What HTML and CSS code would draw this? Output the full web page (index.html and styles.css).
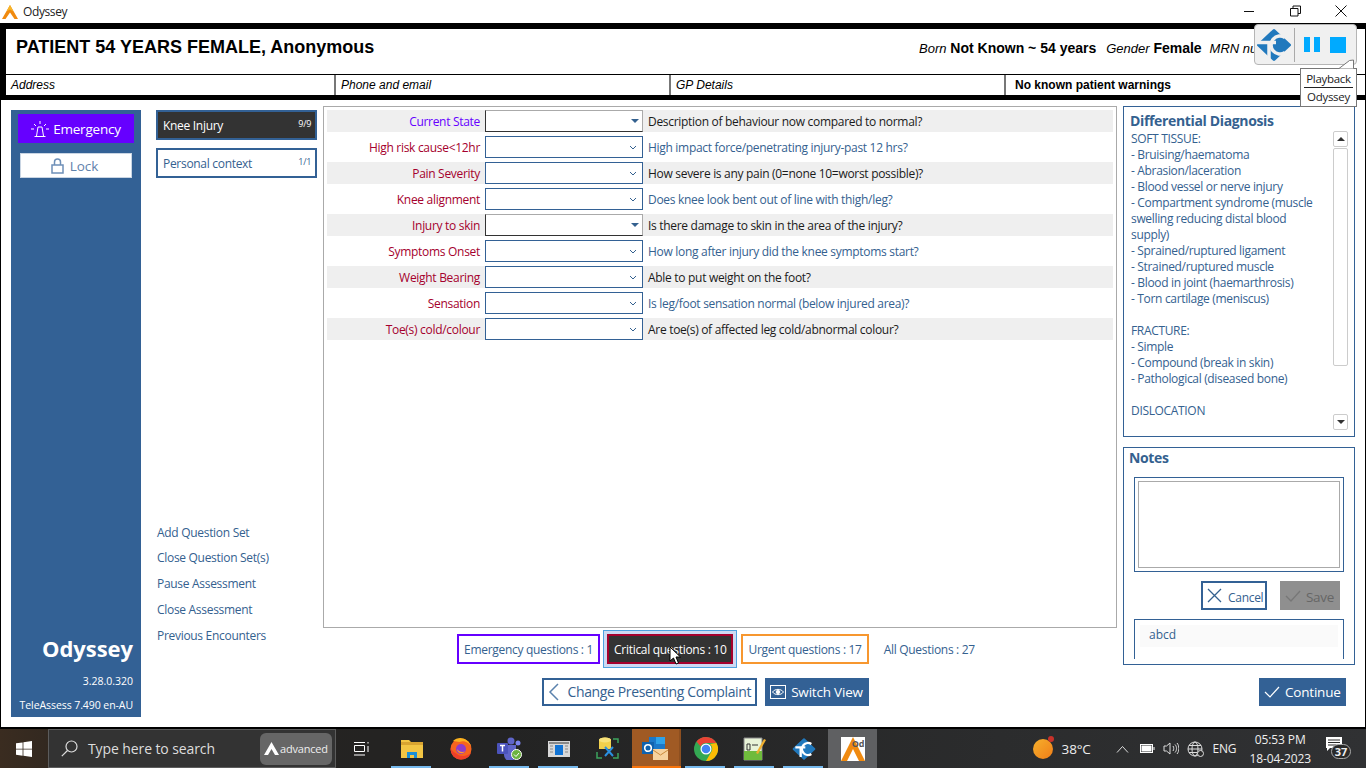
FILE: index.html
```html
<!DOCTYPE html>
<html lang="en">
<head>
<meta charset="utf-8">
<title>Odyssey</title>
<link rel="stylesheet" href="styles.css">
</head>
<body>
<div class="screen">
  <div class="titlebar">
    <svg class="app-logo" viewBox="0 0 16 14" width="16" height="14"><path d="M8 0 L16 14 H12.500 L8 7.500 L3.500 14 H0 Z" fill="#f08a10"/><path d="M8 0 L11.500 6.500 L8 4.500 L4.500 6.500 Z" fill="#f7b62a"/></svg>
    <span class="app-title">Odyssey</span>
    <div class="winbtns">
      <svg width="46" height="23" viewBox="0 0 46 23"><path d="M18 11.500H28" stroke="#111"/></svg>
      <svg width="46" height="23" viewBox="0 0 46 23"><path d="M18.500 8.500h7.500v7.500h-7.500zM21 8.500v-2.500h7.500v7.500h-2.500" fill="none" stroke="#111"/></svg>
      <svg width="46" height="23" viewBox="0 0 46 23"><path d="M17.500 5.500l11 11M28.500 5.500l-11 11" stroke="#111"/></svg>
    </div>
  </div>
  <div class="window">
    <header class="patient">
      <div class="patient-top">
        <h1 class="patient-name">PATIENT 54 YEARS FEMALE, Anonymous</h1>
        <div class="patient-meta"><i>Born</i> <b>Not Known ~ 54 years</b> <i class="gap">Gender</i> <b>Female</b> <i class="gap2">MRN number</i></div>
      </div>
      <div class="patient-row">
        <div class="cell"><i>Address</i></div>
        <div class="cell"><i>Phone and email</i></div>
        <div class="cell"><i>GP Details</i></div>
        <div class="cell warn"><b>No known patient warnings</b></div>
      </div>
    </header>
    <main class="main">
      <aside class="sidebar">
        <button class="btn-emergency">
          <svg width="18" height="16" viewBox="0 0 18 16" fill="none" stroke="#fff" stroke-width="1"><path d="M3.500 15.500h11M5.500 15l1.500-9h4l1.500 9M9 0v3M3 3l2 2M15 3l-2 2M0 8h3M15 8h3"/></svg>
          Emergency
        </button>
        <button class="btn-lock">
          <svg width="13" height="16" viewBox="0 0 13 16" fill="none" stroke="#6d8fb8" stroke-width="1.500"><rect x="1" y="7" width="11" height="8"/><path d="M3.500 7V4a3 3 0 0 1 6 0v3"/></svg>
          Lock
        </button>
        <div class="brand">
          <div class="brand-name">Odyssey</div>
          <div class="brand-ver">3.28.0.320</div>
          <div class="brand-ta">TeleAssess 7.490 en-AU</div>
        </div>
      </aside>
      <nav class="sets">
        <div class="set active"><span>Knee Injury</span><small>9/9</small></div>
        <div class="set"><span>Personal context</span><small>1/1</small></div>
        <div class="links">
          <a>Add Question Set</a>
          <a>Close Question Set(s)</a>
          <a>Pause Assessment</a>
          <a>Close Assessment</a>
          <a>Previous Encounters</a>
        </div>
      </nav>
      <section class="centre">
        <div class="questions">
          <div class="q shade"><label class="emerg">Current State</label><div class="sel dark"><svg class="tri" width="8" height="4" viewBox="0 0 8 4"><path d="M0 0h8L4 4z" fill="#34618f"/></svg></div><p class="black">Description of behaviour now compared to normal?</p></div>
          <div class="q"><label>High risk cause&lt;12hr</label><div class="sel"><svg class="chev" width="8" height="5" viewBox="0 0 8 5"><path d="M1 1l3 3 3-3" fill="none" stroke="#34618f"/></svg></div><p>High impact force/penetrating injury-past 12 hrs?</p></div>
          <div class="q shade"><label>Pain Severity</label><div class="sel"><svg class="chev" width="8" height="5" viewBox="0 0 8 5"><path d="M1 1l3 3 3-3" fill="none" stroke="#34618f"/></svg></div><p class="black">How severe is any pain (0=none 10=worst possible)?</p></div>
          <div class="q"><label>Knee alignment</label><div class="sel"><svg class="chev" width="8" height="5" viewBox="0 0 8 5"><path d="M1 1l3 3 3-3" fill="none" stroke="#34618f"/></svg></div><p>Does knee look bent out of line with thigh/leg?</p></div>
          <div class="q shade"><label>Injury to skin</label><div class="sel dark"><svg class="tri" width="8" height="4" viewBox="0 0 8 4"><path d="M0 0h8L4 4z" fill="#34618f"/></svg></div><p class="black">Is there damage to skin in the area of the injury?</p></div>
          <div class="q"><label>Symptoms Onset</label><div class="sel"><svg class="chev" width="8" height="5" viewBox="0 0 8 5"><path d="M1 1l3 3 3-3" fill="none" stroke="#34618f"/></svg></div><p>How long after injury did the knee symptoms start?</p></div>
          <div class="q shade"><label>Weight Bearing</label><div class="sel"><svg class="chev" width="8" height="5" viewBox="0 0 8 5"><path d="M1 1l3 3 3-3" fill="none" stroke="#34618f"/></svg></div><p class="black">Able to put weight on the foot?</p></div>
          <div class="q"><label>Sensation</label><div class="sel"><svg class="chev" width="8" height="5" viewBox="0 0 8 5"><path d="M1 1l3 3 3-3" fill="none" stroke="#34618f"/></svg></div><p>Is leg/foot sensation normal (below injured area)?</p></div>
          <div class="q shade"><label>Toe(s) cold/colour</label><div class="sel"><svg class="chev" width="8" height="5" viewBox="0 0 8 5"><path d="M1 1l3 3 3-3" fill="none" stroke="#34618f"/></svg></div><p class="black">Are toe(s) of affected leg cold/abnormal colour?</p></div>
        </div>
        <div class="filters">
          <div class="filter f-em">Emergency questions : 1</div>
          <div class="f-halo"><div class="filter f-cr">Critical questions : 10</div>
            <svg class="cursor" width="13" height="19" viewBox="0 0 13 19"><path d="M1 1v14l3.500-3 2.500 6 2.500-1-2.500-6h4.500z" fill="#fff" stroke="#000"/></svg>
          </div>
          <div class="filter f-ur">Urgent questions : 17</div>
          <div class="filter f-all">All Questions : 27</div>
        </div>
        <div class="actions">
          <button class="btn-back">
            <svg width="12" height="18" viewBox="0 0 12 18" fill="none" stroke="#5b82ad" stroke-width="1.500"><path d="M10 1L2 9l8 8"/></svg>
            Change Presenting Complaint
          </button>
          <button class="btn-switch">
            <svg width="16" height="14" viewBox="0 0 16 14" fill="none" stroke="#fff"><rect x=".5" y=".5" width="15" height="13"/><path d="M2.500 7C5 3.500 11 3.500 13.500 7 11 10.500 5 10.500 2.500 7z"/><circle cx="8" cy="7" r="1.800" fill="#fff"/></svg>
            Switch View
          </button>
        </div>
      </section>
      <aside class="right">
        <div class="panel diff">
          <h2>Differential Diagnosis</h2>
          <div class="diff-body">
            <div class="diff-text">SOFT TISSUE:<br>- Bruising/haematoma<br>- Abrasion/laceration<br>- Blood vessel or nerve injury<br>- Compartment syndrome (muscle swelling reducing distal blood supply)<br>- Sprained/ruptured ligament<br>- Strained/ruptured muscle<br>- Blood in joint (haemarthrosis)<br>- Torn cartilage (meniscus)<br><br>FRACTURE:<br>- Simple<br>- Compound (break in skin)<br>- Pathological (diseased bone)<br><br>DISLOCATION</div>
            <div class="scroll">
              <div class="sb"><svg width="8" height="4" viewBox="0 0 8 4"><path d="M0 4h8L4 0z" fill="#333"/></svg></div>
              <div class="sb thumb"></div>
              <div class="sb sb-end"><svg width="8" height="4" viewBox="0 0 8 4"><path d="M0 0h8L4 4z" fill="#333"/></svg></div>
            </div>
          </div>
        </div>
        <div class="panel notes">
          <h2>Notes</h2>
          <div class="note-box"><div class="note-inner"></div></div>
          <div class="note-btns">
            <button class="btn-cancel">
              <svg width="15" height="15" viewBox="0 0 15 15" fill="none" stroke="#34618f" stroke-width="1.300"><path d="M1 1l13 13M14 1L1 14"/></svg>
              <span>Cancel</span>
            </button>
            <button class="btn-save">
              <svg width="16" height="12" viewBox="0 0 16 12" fill="none" stroke="#777" stroke-width="1.300"><path d="M1 6l5 5L15 1"/></svg>
              <span>Save</span>
            </button>
          </div>
          <div class="note-list"><div class="note-item">abcd</div></div>
        </div>
        <div class="continue-row">
          <button class="btn-continue">
            <svg width="16" height="12" viewBox="0 0 16 12" fill="none" stroke="#fff" stroke-width="1.200"><path d="M1 6l5 5L15 1"/></svg>
            Continue
          </button>
        </div>
      </aside>
    </main>
  </div>
  <footer class="taskbar">
    <div class="start"><svg width="16" height="16" viewBox="0 0 16 16" fill="#fff"><path d="M0 2.300l6.600-.9v6.300H0zM7.400 1.300L16 0v7.700H7.400zM0 8.400h6.600v6.300L0 13.800zM7.400 8.400H16V16l-8.600-1.200z"/></svg></div>
    <div class="search">
      <svg width="17" height="17" viewBox="0 0 17 17" fill="none" stroke="#ddd" stroke-width="1.200"><circle cx="10.500" cy="6.500" r="5.500"/><path d="M6.500 10.500L.8 16.200"/></svg>
      <span class="search-text">Type here to search</span>
      <div class="adv"><svg width="15" height="13" viewBox="0 0 15 13"><path d="M7.500 0L15 13h-4L7.500 7 4 13H0z" fill="#fff"/></svg><span>advanced</span></div>
    </div>
    <div class="taskview"><svg width="16" height="15" viewBox="0 0 16 15" fill="none" stroke="#fff"><path d="M0 1.500h11M0 14h11M.5 4.500h10v6H.5zM14 1v1.500M14 5v6"/></svg></div>
    <div class="tb"><div class="ti run"><svg width="22" height="18" viewBox="0 0 22 18"><path d="M0 0h8l2 2h12v16H0z" fill="#f3c544"/><path d="M0 2h22v3H0z" fill="#d9a431"/><path d="M6 18v-6h10v6h-3v-3H9v3z" fill="#1a8fd6"/></svg></div>
      <div class="ti"><svg width="22" height="22" viewBox="0 0 22 22"><circle cx="11" cy="11" r="10.500" fill="#f7641e"/><circle cx="11" cy="11" r="5" fill="#8e3ccb"/><path d="M7 11a4.500 4.500 0 0 0 8 2.500c-3 1-6 .5-8-2.500z" fill="#ff9a2a"/><path d="M3 3C8-2 18-1 21.500 9c-2-4-7-7-12-5z" fill="#fbb31f"/><path d="M.5 10c0 7 5 11.500 10.500 11.500 5.500 0 9-3 10-7-3 3.500-10 5-14 1.500-3-2-5-3-6.500-6z" fill="#ef3f2a"/></svg></div>
      <div class="ti run"><svg width="25" height="23" viewBox="0 0 25 23"><circle cx="14" cy="4" r="3.500" fill="#5f65c9"/><circle cx="21" cy="6" r="2.500" fill="#7b83eb"/><path d="M7 8h12v10a5 5 0 0 1-12 0z" fill="#5f65c9"/><rect x="0" y="6" width="11" height="11" rx="1" fill="#4b53bc"/><path d="M3 8.500h5M5.500 8.500v6" stroke="#fff" stroke-width="1.500"/><circle cx="19.500" cy="17.500" r="5" fill="#6cb33f" stroke="#fff"/><path d="M17 17.500l2 2 3-3.500" fill="none" stroke="#fff"/></svg></div>
      <div class="ti run"><svg width="22" height="16" viewBox="0 0 22 16"><rect width="22" height="16" fill="#d8d8d8"/><rect x="1" y="1" width="20" height="2" fill="#888"/><rect x="7" y="4" width="8" height="10" fill="#1173d4"/><path d="M2 5h3M2 8h3M2 11h3M17 5h3M17 8h3M17 11h3" stroke="#888"/></svg></div>
      <div class="ti"><svg width="23" height="23" viewBox="0 0 23 23"><path d="M3 3a6 2.500 0 0 1 12 0v9H3z" fill="#f1d04c"/><ellipse cx="9" cy="3" rx="6" ry="2.500" fill="#f7e27a"/><path d="M17 2h5v4M1 15v6h5M22 16v5h-5" fill="none" stroke="#3da35d" stroke-width="1.500"/><path d="M9 10l8 9M17 10l-8 9" stroke="#2a8fe0" stroke-width="2"/></svg></div>
      <div class="ti outlook"><svg width="27" height="25" viewBox="0 0 27 25"><rect x="7" y="1" width="16" height="15" fill="#1a78c9"/><rect x="14" y="1" width="9" height="7" fill="#2ea2e8"/><rect x="0" y="6" width="12" height="12" fill="#0f62ae"/><circle cx="6" cy="12" r="3.300" fill="none" stroke="#fff" stroke-width="1.600"/><rect x="11" y="13" width="15" height="11" fill="#f6d29e"/><path d="M11 14l7.500 5 7.500-5" fill="none" stroke="#c98a3c"/></svg></div>
      <div class="ti run"><svg width="24" height="24" viewBox="0 0 24 24"><circle cx="12" cy="12" r="12" fill="#34a853"/><path d="M12 0a12 12 0 0 1 10.400 6H12a6 6 0 0 0-5.400 3.400L2.500 4.500A12 12 0 0 1 12 0z" fill="#ea4335"/><path d="M22.400 6A12 12 0 0 1 12 24l5.200-9A6 6 0 0 0 16 7z" fill="#fbbc05"/><circle cx="12" cy="12" r="5.500" fill="#fff"/><circle cx="12" cy="12" r="4.300" fill="#4285f4"/></svg></div>
      <div class="ti run"><svg width="23" height="24" viewBox="0 0 23 24"><path d="M1 1h18v22H1z" fill="#e8f3d8" stroke="#888"/><path d="M1 14h18v9H1z" fill="#6fbb3c"/><path d="M4 7h3v6H4zM9 8h6" stroke="#333" fill="none"/><path d="M13 16L21 2l2 1-8 14z" fill="#f0b030"/></svg></div>
      <div class="ti run"><svg width="24" height="24" viewBox="0 0 36 34"><path d="M18 2.500L33.500 17 18 31.500 2.500 17z" fill="#2179bd" stroke="#2179bd" stroke-width="3" stroke-linejoin="round"/><path d="M5 14.500H20M13 14.500V29" stroke="#fff" stroke-width="3.500" fill="none"/><path d="M29 9.500a9 9 0 1 0 0 15" stroke="#fff" stroke-width="3.500" fill="none"/></svg></div>
      <div class="ti odyssey"><div class="ody-thumb"><svg width="24" height="24" viewBox="0 0 24 24"><path d="M12 0l12 24h-6l-6-12-6 12H0z" fill="#f08a10"/></svg><span>Od</span></div></div>
    </div>
    <div class="tray">
      <div class="sun"><i></i></div>
      <span class="temp">38°C</span>
      <svg class="ic ic-up" width="13" height="8" viewBox="0 0 13 8" fill="none" stroke="#ddd"><path d="M1 7.500l5.500-6 5.500 6"/></svg>
      <svg class="ic" width="15" height="9" viewBox="0 0 15 9" fill="none" stroke="#fff"><rect x=".5" y=".5" width="12" height="8"/><rect x="2" y="2" width="9" height="5" fill="#fff"/><path d="M14 3v3"/></svg>
      <svg class="ic" width="16" height="13" viewBox="0 0 16 13" fill="none" stroke="#ddd"><path d="M1 4h2.500L7 1v11L3.500 9H1zM10 4c1 1.500 1 3.500 0 5M12 2.500c2 2 2 6 0 8M14 1c2.500 3 2.500 8 0 11"/></svg>
      <svg class="ic" width="17" height="16" viewBox="0 0 17 16" fill="none" stroke="#ddd"><circle cx="8" cy="8" r="7"/><ellipse cx="8" cy="8" rx="3" ry="7"/><path d="M1 8h14M2 4.500h12M2 11.500h12"/><circle cx="13.500" cy="12.500" r="3" fill="#2a2a2a"/></svg>
      <span class="lang">ENG</span>
      <div class="clock"><div>05:53 PM</div><div>18-04-2023</div></div>
      <div class="notif"><svg width="16" height="14" viewBox="0 0 16 14"><path d="M0 0h16v11H4l-3 3v-3H0z" fill="#fff"/><path d="M2 3h12M2 5.500h12M2 8h8" stroke="#2a2a2a"/></svg><span>37</span></div>
    </div>
  </footer>
  <div class="player">
    <svg width="36" height="34" viewBox="0 0 36 34"><path d="M18 2.500L33.500 17 18 31.500 2.500 17z" fill="#2179bd" stroke="#2179bd" stroke-width="3" stroke-linejoin="round"/><path d="M0 14.500H20M13 14.500V34" stroke="#f0f0f0" stroke-width="3.500" fill="none"/><path d="M29 9.500a9 9 0 1 0 0 15" stroke="#f0f0f0" stroke-width="3.500" fill="none"/></svg>
    <div class="pl-sep"></div>
    <div class="pl-pause"><i></i><i></i></div>
    <div class="pl-stop"></div>
  </div>
  <div class="tip">
    <svg class="tip-arrow" width="16" height="9" viewBox="0 0 16 9"><path d="M0 8.500L10.500 .5 14.500 0V8.500" fill="#fff" stroke="#777"/><path d="M1 9h13v1H1z" fill="#fff"/></svg>
    <div class="tip-a">Playback</div><div class="tip-b">Odyssey</div>
  </div>
</div>
</body>
</html>
```
FILE: styles.css
```css
*{box-sizing:border-box}
html,body{margin:0;padding:0;height:100%;overflow:hidden}
body{font-family:"Open Sans","Noto Sans",sans-serif;font-size:12px;color:#34618f;background:#fff}
button{font:inherit;margin:0;padding:0;cursor:default}
h1,h2,p{margin:0}
.screen{position:relative;width:1366px;height:768px;display:flex;flex-direction:column;overflow:hidden}

.titlebar{height:23px;display:flex;align-items:center;background:#fff;flex:none;padding-left:2px}
.app-logo{margin-right:5px}
.app-title{color:#222;font-size:12px;letter-spacing:-.4px}
.winbtns{margin-left:auto;display:flex;margin-right:2px}
.winbtns svg{display:block}

.window{flex:1;min-height:0;display:flex;flex-direction:column;background:#fff;border-left:1px solid #000;border-right:1px solid #000}

.patient{flex:none;background:#000;padding:6px 0 5px 5px;height:77px;display:flex;flex-direction:column;font-family:"Liberation Sans",Arial,sans-serif;color:#000}
.patient-top{height:45px;background:#fff;display:flex;justify-content:space-between;padding:8px 0 0 10px;overflow:hidden}
.patient-name{font-size:18px;font-weight:700;line-height:20px}
.patient-meta{font-size:14px;line-height:20px;padding-top:1px;white-space:nowrap;width:446px;flex:none;color:#000;overflow:hidden}
.patient-meta i{font-size:13px}
.patient-meta .gap{margin-left:6px}
.patient-meta .gap2{margin-left:4px}
.patient-row{margin-top:1px;height:20px;background:#fff;display:grid;grid-template-columns:328px 335px 335px 1fr;font-size:12px;line-height:20px;color:#000}
.cell{padding-left:5px;border-left:2px solid #777}
.cell:first-child{border-left:0}
.warn{padding-left:9px}

.main{flex:1;min-height:0;display:flex;padding:6px 10px 10px 5px;background:#fff}

.sidebar{width:130px;margin:4px 0 0 5px;background:#336195;display:flex;flex-direction:column;align-items:center;padding-top:4px;color:#fff;flex:none}
.btn-emergency{width:116px;height:29px;background:#6600ff;color:#fff;border:0;font-size:13.500px;display:flex;align-items:center;justify-content:center;gap:4px;letter-spacing:-.2px}
.btn-lock{width:112px;height:25px;margin-top:10px;background:#fff;color:#5f82ab;border:1px solid #c9d5e3;font-size:13.500px;display:flex;align-items:center;justify-content:center;gap:6px;padding-right:3px}
.brand{margin-top:auto;width:100%;padding-right:8px;text-align:right}
.brand-name{font-size:22px;font-weight:700;line-height:28px;letter-spacing:-.05px}
.brand-ver{font-size:10.500px;line-height:14px;margin-top:12px}
.brand-ta{font-size:10.500px;line-height:14px;margin-top:10px;margin-bottom:5px;letter-spacing:-.07px;white-space:nowrap}

.sets{width:161px;margin:4px 0 0 15px;flex:none;display:flex;flex-direction:column;padding-bottom:68px}
.set{height:30px;border:2px solid #336195;display:flex;justify-content:space-between;padding:0 4px 0 5px;align-items:center;background:#fff;margin-bottom:8px;letter-spacing:-.3px}
.set small{font-size:9px;align-self:flex-start;margin-top:5px;letter-spacing:-.3px}
.set.active{background:#333;color:#fff}
.links{margin-top:auto;display:flex;flex-direction:column;padding-left:1px}
.links a{height:26px;line-height:26px;letter-spacing:-.3px;white-space:nowrap}
.links a:first-child{height:25px}

.centre{flex:none;width:794px;margin-left:6px;display:flex;flex-direction:column;align-items:center}
.questions{width:794px;height:522px;border:1px solid #aaa;padding:3px;display:flex;flex-direction:column;gap:4px;flex:none;background:#fff}
.q{height:22px;display:flex;align-items:center;flex:none}
.q.shade{background:#efefef}
.q label{width:153px;text-align:right;color:#a5002d;letter-spacing:-.3px;white-space:nowrap}
.q label.emerg{color:#6600ff}
.sel{width:158px;height:22px;margin-left:5px;background:#fff;border:1px solid #336195;display:flex;align-items:center;justify-content:flex-end;padding-right:5px;flex:none}
.sel.dark{border:1px solid #aaa;border-bottom-color:#333;border-left-color:#333;padding-right:3px}
.q p{margin-left:5px;letter-spacing:-.3px;white-space:nowrap}
.q p.black{color:#1a1a1a}

.filters{display:flex;align-items:center;margin-top:6px;height:30px;padding-right:1px}
.filter{height:30px;line-height:28px;border:2px solid transparent;padding:0 5px;white-space:nowrap;letter-spacing:-.3px}
.f-em{border-color:#6600ff}
.f-halo{position:relative;border:1px solid #4ea1e0;background:#cdd9f2;padding:3px;margin-left:3px;height:38px;display:flex;align-items:center}
.f-cr{background:#333;color:#fff;border-color:#a5002d;height:30px}
.cursor{position:absolute;left:65px;top:15px}
.f-ur{border-color:#f7972f;margin-left:4px}
.f-all{margin-left:8px}
.actions{display:flex;margin-top:14px;gap:8px;margin-right:30px}
.btn-back{width:215px;height:28px;background:#fff;border:2px solid #336195;color:#34618f;font-size:14px;display:flex;align-items:center;padding:0 0 1px 4px;gap:8px;white-space:nowrap;letter-spacing:-.37px}
.btn-switch{width:104px;height:28px;background:#336195;border:0;color:#fff;font-size:13.500px;display:flex;align-items:center;justify-content:center;gap:5px;letter-spacing:-.2px;white-space:nowrap}

.right{width:232px;margin-left:6px;flex:none;display:flex;flex-direction:column}
.panel{border:1px solid #336195;background:#fff}
.panel h2{font-size:14px;font-weight:700;line-height:20px;letter-spacing:-.35px}
.diff{height:331px;padding:4px 6px 0 6px}
.diff-body{display:flex}
.diff-text{width:192px;margin-left:1px;line-height:16px;letter-spacing:-.33px;flex:none}
.scroll{width:16px;margin-left:10px;height:299px;display:flex;flex-direction:column;gap:1px}
.sb{height:16px;flex:none;border:1px solid #ccc;border-radius:2px;display:flex;align-items:center;justify-content:center;background:#fff}
.sb.thumb{height:218px}
.sb.sb-end{margin-top:auto}
.notes{margin-top:10px;height:218px;padding:0 10px;display:flex;flex-direction:column}
.notes h2{margin-left:-5px;height:29px}
.note-box{height:95px;border:1px solid #336195;padding:3px;flex:none}
.note-inner{height:100%;border:1px solid #aaa}
.note-btns{display:flex;justify-content:flex-end;margin-top:9px;height:29px;padding-right:4px;flex:none}
.btn-cancel{width:66px;height:29px;background:#fff;border:2px solid #336195;color:#34618f;display:flex;align-items:center;padding-left:4px;gap:6px;letter-spacing:-.3px}
.btn-cancel span,.btn-save span{padding-top:3px}
.btn-save{width:60px;margin-left:13px;height:29px;background:#8f8f8f;border:0;color:#666;display:flex;align-items:center;padding-left:5px;gap:5px;font-size:13.500px;letter-spacing:-.3px}
.note-list{margin-top:9px;height:40px;border:1px solid #336195;border-bottom:0;padding:5px 5px 0;flex:none}
.note-item{height:22px;background:#fafafa;padding-left:9px;line-height:20px}
.continue-row{display:flex;justify-content:flex-end;margin-top:13px;padding-right:9px}
.btn-continue{width:87px;height:28px;background:#336195;border:0;color:#fff;font-size:13.500px;display:flex;align-items:center;padding-left:5px;gap:5px;letter-spacing:-.2px;white-space:nowrap}

.taskbar{height:41px;flex:none;display:flex;background:linear-gradient(90deg,#3a2c20 0,#262320 130px,#232323 500px,#2b2c2d 1000px,#303133 1366px);border-top:2px solid #000;color:#fff;align-items:stretch}
.start{width:48px;display:flex;align-items:center;justify-content:center}
.search{width:288px;background:#333;border:1px solid #5c5c5c;display:flex;align-items:center;padding-left:12px;color:#ddd}
.search-text{margin-left:10px;font-size:14px;letter-spacing:-.1px;white-space:nowrap}
.adv{margin-left:auto;margin-right:3px;width:72px;height:32px;background:#666;border-radius:6px;display:flex;align-items:center;justify-content:center;gap:1px;font-size:11px;color:#eee;letter-spacing:-.2px;white-space:nowrap}
.taskview{width:51px;display:flex;align-items:center;justify-content:center}
.tb{display:flex}
.ti{width:49px;display:flex;align-items:center;justify-content:center;position:relative}
.ti.run::after{content:"";position:absolute;left:4px;right:5px;bottom:0;height:2px;background:#76b9ed}
.ti.outlook{background:#a05a24;border-right:2px solid #8d4f20}
.ti.outlook::after{content:"";position:absolute;left:0;right:-2px;bottom:0;height:2px;background:#f7740c}
.ti.odyssey{background:#5f6062}
.ody-thumb{width:24px;height:24px;background:#fff;position:relative}
.ody-thumb span{position:absolute;right:0;top:1px;font-size:9px;font-weight:700;color:#555;line-height:11px}
.tray{margin-left:auto;display:flex;align-items:center;padding-right:14px;color:#eee;font-size:12px}
.sun{width:20px;height:20px;border-radius:50%;background:linear-gradient(135deg,#f6b02c,#ef7d18);position:relative;margin-right:9px}
.sun i{position:absolute;right:-1px;top:-3px;width:6px;height:6px;border-radius:50%;background:#c8322a}
.temp{font-size:13.500px;margin-right:25px;letter-spacing:-.2px}
.ic{margin-right:8px}
.ic-up{margin-right:11px}
.lang{margin-left:1px;margin-right:13px;letter-spacing:-.2px}
.clock{text-align:center;line-height:19px;font-size:12px;margin-right:15px;letter-spacing:-.1px}
.notif{position:relative;width:26px;height:24px}
.notif span{position:absolute;left:5px;top:7px;width:20px;height:15px;border-radius:8px;border:1px solid #aaa;background:#2a2a2a;font-size:11px;font-weight:700;line-height:13px;text-align:center}

.player{position:absolute;left:1254px;top:24px;width:103px;height:41px;background:#f0f0f0;border:1px solid #b5b5b5;border-radius:4px;display:flex;align-items:center;padding-left:1px}
.pl-sep{width:1px;height:34px;background:#aaa;margin:0 9px 0 2px}
.pl-pause{display:flex;gap:4px;margin-right:10px}
.pl-pause i{display:block;width:6px;height:15px;background:#00aaff}
.pl-stop{width:16px;height:16px;background:#00aaff}
.tip{position:absolute;left:1300px;top:68px;width:57px;height:39px;background:#fff;border:1px solid #777;font-size:11.500px;color:#1a1a1a;text-align:center;line-height:17px;padding:1px 3px 0;letter-spacing:-.3px}
.tip-arrow{position:absolute;right:1px;top:-9px;display:block;overflow:visible}
.tip-a{border-bottom:1px solid #222;height:18px}
```
